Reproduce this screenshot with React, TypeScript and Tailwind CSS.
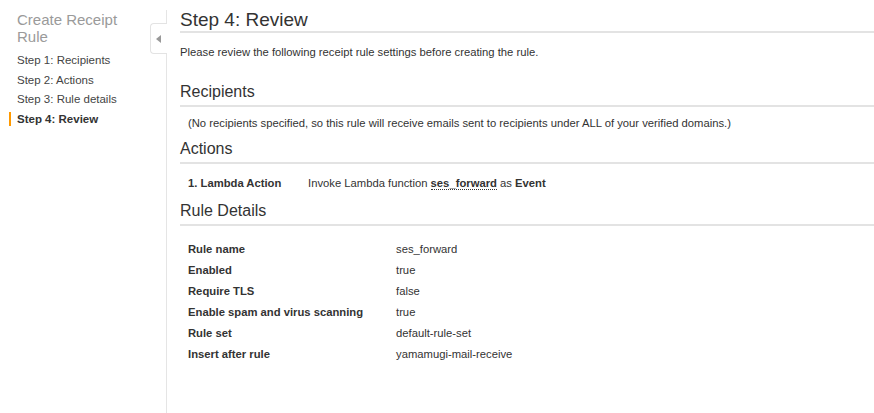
import React from 'react';

const steps = ['Step 1: Recipients', 'Step 2: Actions', 'Step 3: Rule details', 'Step 4: Review'];

const details: [string, string][] = [
  ['Rule name', 'ses_forward'],
  ['Enabled', 'true'],
  ['Require TLS', 'false'],
  ['Enable spam and virus scanning', 'true'],
  ['Rule set', 'default-rule-set'],
  ['Insert after rule', 'yamamugi-mail-receive'],
];

function SectionTitle({ children, className }: { children: React.ReactNode; className: string }) {
  return (
    <h2 className={`text-[16px] leading-[20px] pb-[3px] border-b-2 border-[#e3e3e3] text-[#333] ${className}`}>
      {children}
    </h2>
  );
}

export default function App() {
  return (
    <div
      className="flex w-[874px] h-[413px] bg-white overflow-hidden text-[#333]"
      style={{ fontFamily: '"Liberation Sans", Arial, sans-serif' }}
    >
      {/* sidebar */}
      <aside className="relative w-[167px] shrink-0 mt-[10px] border-r border-[#e5e5e5]">
        <div className="pl-[17px] pt-[1px]">
          <div className="text-[15px] leading-[17px] text-[#9a9a9a] w-[110px]">Create Receipt Rule</div>
          <ul className="mt-[6px] text-[11.5px] leading-[19.7px] text-[#444]">
            {steps.map((s, i) => (
              <li key={s} className={`relative ${i === steps.length - 1 ? 'font-bold text-[#333]' : ''}`}>
                {i === steps.length - 1 && (
                  <span className="absolute left-[-8px] top-[2px] w-[2px] h-[14px] bg-[#f90]" />
                )}
                {s}
              </li>
            ))}
          </ul>
        </div>
        {/* collapse tab */}
        <div className="absolute right-[-1px] top-[13px] w-[17px] h-[31px] bg-white border border-r-0 border-[#e3e3e3] rounded-l-[4px] flex items-center justify-center">
          <svg width="5" height="8" viewBox="0 0 5 8" className="ml-[-2px]">
            <path d="M5 0 L0 4 L5 8 Z" fill="#999" />
          </svg>
        </div>
      </aside>

      {/* main */}
      <main className="flex-1 pl-[13px]">
        <h1 className="text-[19px] leading-[23px] mt-[8px] border-b-2 border-[#e3e3e3] text-[#333]">Step 4: Review</h1>
        <p className="mt-[12px] text-[11.25px] leading-[14px]">
          Please review the following receipt rule settings before creating the rule.
        </p>

        <SectionTitle className="mt-[23px]">Recipients</SectionTitle>
        <p className="mt-[9px] pl-[8px] text-[11.25px] leading-[14px]">
          (No recipients specified, so this rule will receive emails sent to recipients under ALL of your verified domains.)
        </p>

        <SectionTitle className="mt-[9px]">Actions</SectionTitle>
        <div className="mt-[12px] pl-[8px] flex text-[11.25px] leading-[14px]">
          <div className="w-[120px] font-bold">1. Lambda Action</div>
          <div>
            Invoke Lambda function{' '}
            <span className="font-bold border-b border-dotted border-[#333]">ses_forward</span> as{' '}
            <span className="font-bold">Event</span>
          </div>
        </div>

        <SectionTitle className="mt-[11px]">Rule Details</SectionTitle>
        <div className="mt-[13px] pl-[8px] text-[11.25px] leading-[21px]">
          {details.map(([k, v]) => (
            <div key={k} className="flex">
              <div className="w-[208px] font-bold">{k}</div>
              <div>{v}</div>
            </div>
          ))}
        </div>
      </main>
    </div>
  );
}
